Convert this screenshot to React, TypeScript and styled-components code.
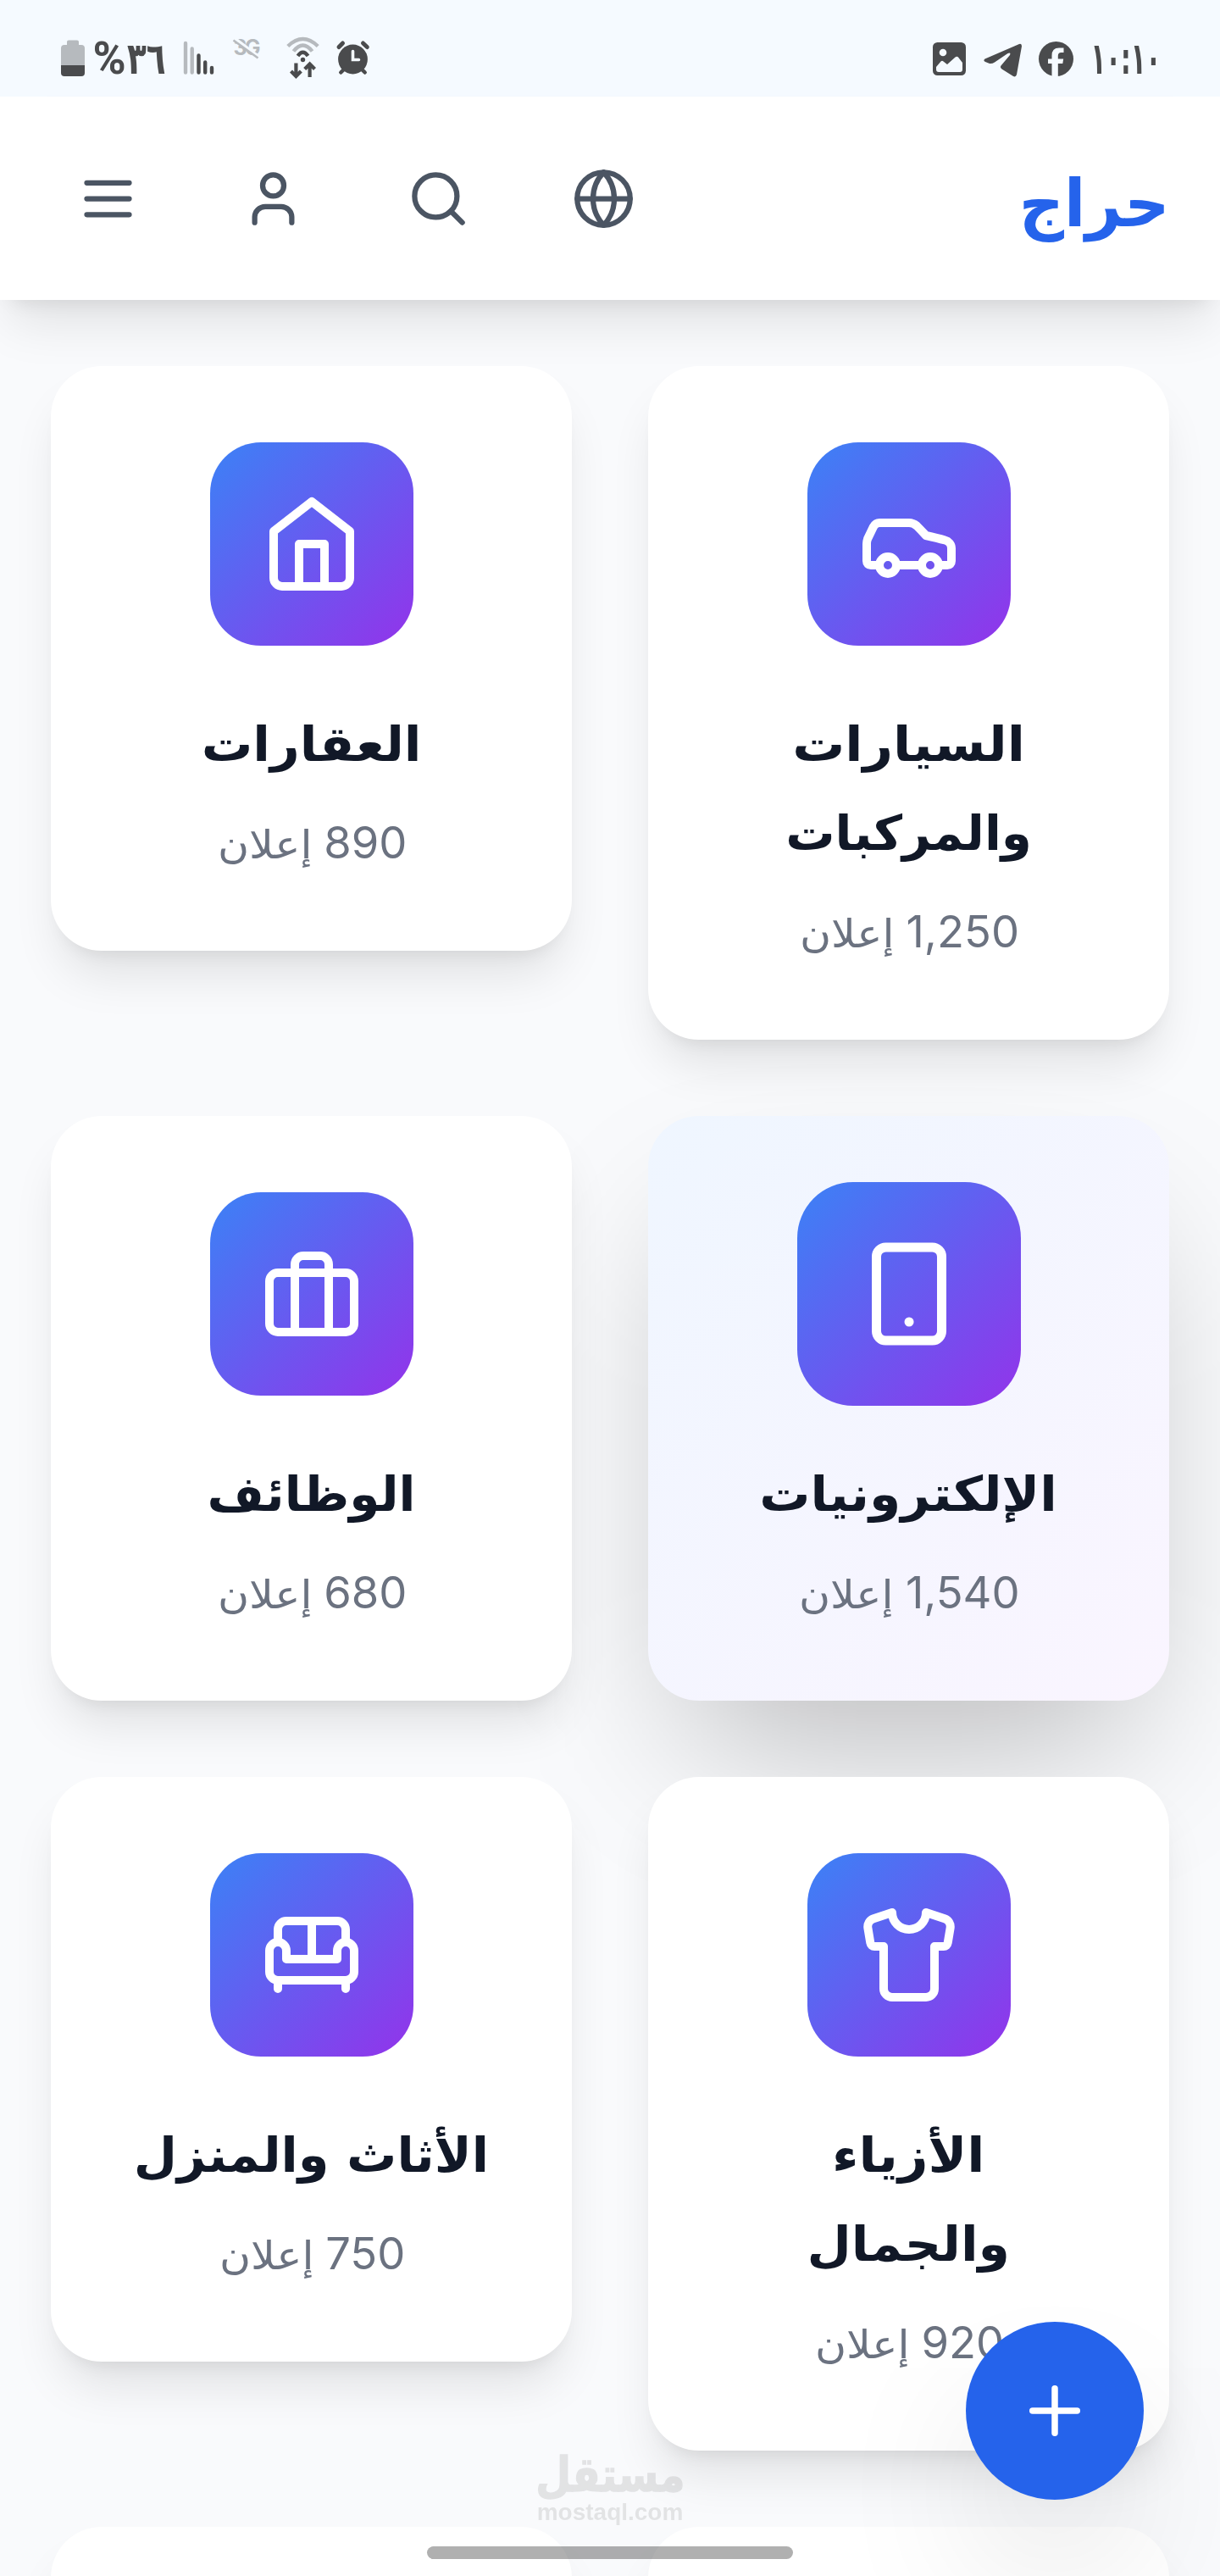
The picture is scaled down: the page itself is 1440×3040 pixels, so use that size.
import React from 'react';
import styled, { createGlobalStyle, css } from 'styled-components';

const GlobalStyle = createGlobalStyle`
  *, *::before, *::after { box-sizing: border-box; }
  html, body { margin: 0; padding: 0; background: #f9fafc; }
  body { overflow: hidden; }
`;

const arabic = '"DejaVu Sans", sans-serif';
const ink = '#4a4b4d';
const faded = '#b6babe';
const statusBg = '#f5faff';

const Page = styled.div`
  position: relative;
  width: 1440px;
  height: 3040px;
  overflow: hidden;
  direction: rtl;
  background: #f9fafc;
  font-family: ${arabic};
`;

/* ---------- phone status bar ---------- */

const StatusBar = styled.div`
  direction: ltr;
  display: flex;
  justify-content: space-between;
  align-items: center;
  height: 114px;
  padding: 24px 75px 0 72px;
  background: ${statusBg};
  color: ${ink};
`;

const StatusGroup = styled.div`
  display: flex;
  align-items: center;
  height: 52px;
`;

const StatusSlot = styled.div<{ $width: number; $before?: number }>`
  display: flex;
  align-items: center;
  justify-content: center;
  flex: none;
  width: ${p => p.$width}px;
  height: 52px;
  margin-left: ${p => p.$before ?? 0}px;

  svg { display: block; width: 100%; height: 100%; overflow: visible; }
`;

const StatusText = styled.span<{ $stretch: number; $size: number; $family?: string }>`
  flex: none;
  font: 700 ${p => p.$size}px/52px ${p => p.$family ?? arabic};
  white-space: nowrap;
  transform: scaleX(${p => p.$stretch});
`;

const BatteryIcon = () => (
  <svg viewBox="72 43 28 52">
    <path d="M79 53V49.500a2 2 0 0 1 2-2h10a2 2 0 0 1 2 2V53h3a4 4 0 0 1 4 4v20H72V57a4 4 0 0 1 4-4z" fill={faded} />
    <path d="M72 77h28v9a4 4 0 0 1-4 4H76a4 4 0 0 1-4-4z" fill={ink} />
  </svg>
);

const SignalIcon = () => (
  <svg viewBox="217 43 35 52" strokeWidth="4.4" strokeLinecap="round">
    <path d="M219 51v34.500M226.700 57.500v28" stroke={faded} />
    <path d="M234.500 65.500v20M242.200 73.500v12M250 80v5.500" stroke={ink} />
  </svg>
);

const NoDataIcon = () => (
  <svg viewBox="275 43 33 52">
    <text x="275.500" y="65" fontFamily="Inter, sans-serif" fontWeight="700" fontSize="25" textLength="32" fill={faded}>3G</text>
    <path d="M276.500 45l29 22" stroke={statusBg} strokeWidth="4" />
    <path d="M275.500 47.500l29 21" stroke={faded} strokeWidth="2.6" />
  </svg>
);

const WifiIcon = () => (
  <svg viewBox="338 43 39 52" fill="none">
    <path d="M339.800 54.500Q357.500 37.500 375.200 54.500M346.500 60.500Q357.500 46.500 368.500 60.500" stroke={faded} strokeWidth="4.400" />
    <path d="M351.500 66Q357.500 57.500 363.500 66" stroke={ink} strokeWidth="4.400" />
    <circle cx="357.500" cy="70.500" r="2.700" fill={ink} />
    <path d="M349.400 74.500v15M343.500 84l5.900 6 5.900-6M365.600 91V76M359.700 81.500l5.900-6 5.900 6" stroke={ink} strokeWidth="4.200" />
  </svg>
);

const AlarmIcon = () => (
  <svg viewBox="396.500 43 39 52" fill="none" strokeLinecap="round">
    <circle cx="416" cy="70" r="17.400" fill={ink} />
    <path d="M399.500 55.500l4.500-4.500M428 51l4.800 4.500" stroke={ink} strokeWidth="5" />
    <path d="M401.800 85.500l4-4M430.200 85.500l-4-4" stroke={ink} strokeWidth="4.500" />
    <path d="M416 60.500v10h7" stroke={statusBg} strokeWidth="3.600" />
  </svg>
);

const PictureIcon = () => (
  <svg viewBox="1101 43 39 52">
    <rect x="1101" y="50" width="39" height="39" rx="5.500" fill={ink} />
    <circle cx="1113" cy="62" r="4.300" fill={statusBg} />
    <path d="M1105 79l5.500-6.500q1.500-1.500 3 0l4.500 3.500 9.500-8.500q2-1.500 3.500 0l5 6.500v8q0 3-3 3h-25q-3 0-3-3z" fill={statusBg} />
  </svg>
);

const TelegramIcon = () => (
  <svg viewBox="1161 43 45 52" fill={ink}>
    <path d="M1203 52L1162.500 69.500Q1160 71.500 1163 73L1168 75Q1171 75.500 1174 73.500L1189.500 63Q1193.500 61.500 1192 65L1181.500 77.500Q1180 79.500 1182.500 81.500L1196 90Q1199 91.500 1200 88L1206 54.500Q1206 51 1203 52Z" />
  </svg>
);

const FacebookIcon = () => (
  <svg viewBox="1226 43 41 52">
    <circle cx="1246.500" cy="69.500" r="20.500" fill={ink} />
    <path d="M1241.500 91V75H1237V69.500H1241.500V65.500Q1241.500 56.500 1250 56.500H1255.500V62H1252.500Q1248.800 62 1248.800 66V69.500H1255.200L1254.300 75H1248.800V91Z" fill={statusBg} />
  </svg>
);

/* ---------- app header ---------- */

const Header = styled.header`
  position: relative;
  z-index: 2;
  display: flex;
  justify-content: space-between;
  align-items: center;
  height: 240px;
  padding: 0 56px 0 60px;
  background: #fff;
  box-shadow: 0 37.5px 56.25px -11.25px rgba(0, 0, 0, 0.1), 0 15px 22.5px -15px rgba(0, 0, 0, 0.1);
`;

const Logo = styled.div`
  padding-top: 12px;
  font-size: 77px;
  font-weight: 700;
  line-height: 105px;
  color: #2563eb;
  transform: scaleX(0.96);
`;

const Actions = styled.nav`
  display: flex;
  gap: 60px;
`;

const IconButton = styled.button`
  display: flex;
  padding: 30px;
  border: 0;
  background: none;
  color: #4b5563;
`;

const Stroke = styled.svg.attrs({
  viewBox: '0 0 24 24',
  fill: 'none',
  stroke: 'currentColor',
  strokeWidth: 2,
  strokeLinecap: 'round',
  strokeLinejoin: 'round',
})<{ $size: number }>`
  display: block;
  width: ${p => p.$size}px;
  height: ${p => p.$size}px;
`;

/* ---------- category grid ---------- */

const Grid = styled.main`
  display: grid;
  grid-template-columns: 1fr 1fr;
  align-items: start;
  gap: 90px;
  padding: 78px 60px 0;
`;

const restingCard = css`
  background: #fff;
  box-shadow: 0 37.5px 56.25px -11.25px rgba(0, 0, 0, 0.1), 0 15px 22.5px -15px rgba(0, 0, 0, 0.1);
`;

/* The raised card keeps its wide soft shadow and its tint on two layers behind the content. */
const raisedCard = css`
  &::before,
  &::after {
    content: '';
    position: absolute;
    z-index: -1;
    border-radius: 60px;
  }

  &::before {
    inset: 139px 45px -49px;
    background: rgba(0, 0, 0, 0.25);
    filter: blur(94px);
  }

  &::after {
    inset: 0;
    background: linear-gradient(135deg, #eff6ff, #faf5ff);
  }
`;

const Card = styled.article<{ $active?: boolean }>`
  position: relative;
  z-index: 0;
  display: flex;
  flex-direction: column;
  align-items: center;
  min-height: 690px;
  padding: 90px;
  border-radius: 60px;
  ${p => (p.$active ? raisedCard : restingCard)}
`;

const Tile = styled.div<{ $active?: boolean }>`
  display: flex;
  align-items: center;
  justify-content: center;
  flex: none;
  width: 240px;
  height: 240px;
  margin-bottom: 60px;
  border-radius: 60px;
  background: linear-gradient(135deg, #3b82f6, #9333ea);
  color: #fff;
  transform: ${p => (p.$active ? 'scale(1.1)' : 'none')};
`;

const Title = styled.h3`
  margin: 0 0 26px;
  padding-top: 4px;
  font-size: 57px;
  font-weight: 700;
  line-height: 105px;
  text-align: center;
  white-space: nowrap;
  color: #111827;
`;

const TitleLine = styled.span<{ $stretch: number }>`
  display: block;
  transform: scaleX(${p => p.$stretch});
`;

const Count = styled.p`
  display: flex;
  align-items: baseline;
  gap: 19px;
  height: 75px;
  margin: 0;
  padding-inline-end: 7px;
  font: 400 52.5px/75px Inter, sans-serif;
  color: #6b7280;
`;

const CountWord = styled.span`
  font: 400 46px/46px ${arabic};
  transform: scaleX(1.1);
`;

/* ---------- overlays ---------- */

const AddButton = styled.button`
  position: absolute;
  z-index: 3;
  right: 90px;
  bottom: 90px;
  display: flex;
  align-items: center;
  justify-content: center;
  width: 210px;
  height: 210px;
  padding: 0;
  border: 0;
  border-radius: 50%;
  background: #2563eb;
  color: #fff;
  box-shadow: 0 94px 188px -45px rgba(0, 0, 0, 0.25);
`;

const Watermark = styled.div`
  position: absolute;
  z-index: 4;
  left: 620px;
  top: 2889px;
  width: 200px;
  display: flex;
  flex-direction: column;
  align-items: center;
  color: #6e6e6e;
  opacity: 0.16;
`;

const WatermarkName = styled.span`
  font: 700 56px/64px ${arabic};
  height: 62px;
  -webkit-text-stroke: 1.5px currentColor;
  transform: scaleX(0.86);
`;

const WatermarkSite = styled.span`
  direction: ltr;
  font: 700 28px/28px "Liberation Sans", Arial, sans-serif;
`;

const HomePill = styled.div`
  position: absolute;
  z-index: 5;
  left: 504px;
  top: 3005px;
  width: 432px;
  height: 15px;
  border-radius: 8px;
  background: rgba(0, 0, 0, 0.31);
`;

type Category = {
  id: string;
  lines: { text: string; stretch: number }[];
  count: string;
  active?: boolean;
  icon: React.ReactNode;
};

const categories: Category[] = [
  {
    id: 'cars',
    lines: [{ text: 'السيارات', stretch: 1.085 }, { text: 'والمركبات', stretch: 1.02 }],
    count: '1,250',
    icon: (
      <>
        <path d="M19 17h2c.6 0 1-.4 1-1v-3c0-.9-.7-1.7-1.5-1.900C18.700 10.600 16 10 16 10s-1.300-1.400-2.200-2.300c-.5-.4-1.100-.7-1.800-.7H5c-.6 0-1.100.4-1.400.9l-1.400 2.900A3.700 3.700 0 0 0 2 12v4c0 .6.4 1 1 1h2" />
        <circle cx="7" cy="17" r="2" />
        <path d="M9 17h6" />
        <circle cx="17" cy="17" r="2" />
      </>
    ),
  },
  {
    id: 'homes',
    lines: [{ text: 'العقارات', stretch: 1.06 }],
    count: '890',
    icon: (
      <>
        <path d="m3 9 9-7 9 7v11a2 2 0 0 1-2 2H5a2 2 0 0 1-2-2z" />
        <path d="M9 22V12h6v10" />
      </>
    ),
  },
  {
    id: 'electronics',
    lines: [{ text: 'الإلكترونيات', stretch: 1.052 }],
    count: '1,540',
    active: true,
    icon: (
      <>
        <rect width="14" height="20" x="5" y="2" rx="2" />
        <path d="M12 18h.01" />
      </>
    ),
  },
  {
    id: 'jobs',
    lines: [{ text: 'الوظائف', stretch: 1.02 }],
    count: '680',
    icon: (
      <>
        <rect width="20" height="14" x="2" y="7" rx="2" />
        <path d="M16 21V5a2 2 0 0 0-2-2h-4a2 2 0 0 0-2 2v16" />
      </>
    ),
  },
  {
    id: 'fashion',
    lines: [{ text: 'الأزياء', stretch: 1.082 }, { text: 'والجمال', stretch: 1.058 }],
    count: '920',
    icon: (
      <path d="M20.380 3.460 16 2a4 4 0 0 1-8 0L3.620 3.460a2 2 0 0 0-1.340 2.230l.58 3.470a1 1 0 0 0 .99.84H6v10c0 1.100.9 2 2 2h8a2 2 0 0 0 2-2V10h2.150a1 1 0 0 0 .99-.84l.58-3.470a2 2 0 0 0-1.340-2.230z" />
    ),
  },
  {
    id: 'furniture',
    lines: [{ text: 'الأثاث والمنزل', stretch: 1.036 }],
    count: '750',
    icon: (
      <>
        <path d="M20 9V6a2 2 0 0 0-2-2H6a2 2 0 0 0-2 2v3" />
        <path d="M2 11v5a2 2 0 0 0 2 2h16a2 2 0 0 0 2-2v-5a2 2 0 0 0-4 0v2H6v-2a2 2 0 0 0-4 0Z" />
        <path d="M4 18v2M20 18v2M12 4v9" />
      </>
    ),
  },
];

export default function App() {
  return (
    <Page>
      <GlobalStyle />
      <StatusBar>
        <StatusGroup>
          <StatusSlot $width={28}><BatteryIcon /></StatusSlot>
          <StatusSlot $width={35} $before={11}>
            <StatusText $size={54} $stretch={0.98} $family="Roboto, sans-serif">%</StatusText>
          </StatusSlot>
          <StatusSlot $width={43} $before={5.5}>
            <StatusText $size={52} $stretch={0.72}>٣٦</StatusText>
          </StatusSlot>
          <StatusSlot $width={35} $before={22.5}><SignalIcon /></StatusSlot>
          <StatusSlot $width={33} $before={23}><NoDataIcon /></StatusSlot>
          <StatusSlot $width={39} $before={30}><WifiIcon /></StatusSlot>
          <StatusSlot $width={39} $before={19.5}><AlarmIcon /></StatusSlot>
        </StatusGroup>
        <StatusGroup>
          <StatusSlot $width={39}><PictureIcon /></StatusSlot>
          <StatusSlot $width={45} $before={21}><TelegramIcon /></StatusSlot>
          <StatusSlot $width={41} $before={20}><FacebookIcon /></StatusSlot>
          <StatusSlot $width={72} $before={26}>
            <StatusText $size={52} $stretch={0.56}>١٠:١٠</StatusText>
          </StatusSlot>
        </StatusGroup>
      </StatusBar>

      <Header>
        <Logo>حراج</Logo>
        <Actions>
          <IconButton aria-label="اللغة">
            <Stroke $size={75}>
              <circle cx="12" cy="12" r="10" />
              <path d="M12 2a14.500 14.500 0 0 0 0 20 14.500 14.500 0 0 0 0-20M2 12h20" />
            </Stroke>
          </IconButton>
          <IconButton aria-label="بحث">
            <Stroke $size={75}>
              <circle cx="11" cy="11" r="8" />
              <path d="m21 21-4.300-4.300" />
            </Stroke>
          </IconButton>
          <IconButton aria-label="الحساب">
            <Stroke $size={75}>
              <path d="M19 21v-2a4 4 0 0 0-4-4H9a4 4 0 0 0-4 4v2" />
              <circle cx="12" cy="7" r="4" />
            </Stroke>
          </IconButton>
          <IconButton aria-label="القائمة">
            <Stroke $size={75}>
              <path d="M4 12h16M4 6h16M4 18h16" />
            </Stroke>
          </IconButton>
        </Actions>
      </Header>

      <Grid>
        {categories.map(c => (
          <Card key={c.id} $active={c.active}>
            <Tile $active={c.active}>
              <Stroke $size={120}>{c.icon}</Stroke>
            </Tile>
            <Title>
              {c.lines.map(l => (
                <TitleLine key={l.text} $stretch={l.stretch}>{l.text}</TitleLine>
              ))}
            </Title>
            <Count>
              <span>{c.count}</span>
              <CountWord>إعلان</CountWord>
            </Count>
          </Card>
        ))}
        <Card />
        <Card />
      </Grid>

      <AddButton aria-label="إضافة إعلان">
        <Stroke $size={90}>
          <path d="M5 12h14M12 5v14" />
        </Stroke>
      </AddButton>

      <Watermark>
        <WatermarkName>مستقل</WatermarkName>
        <WatermarkSite>mostaql.com</WatermarkSite>
      </Watermark>
      <HomePill />
    </Page>
  );
}
